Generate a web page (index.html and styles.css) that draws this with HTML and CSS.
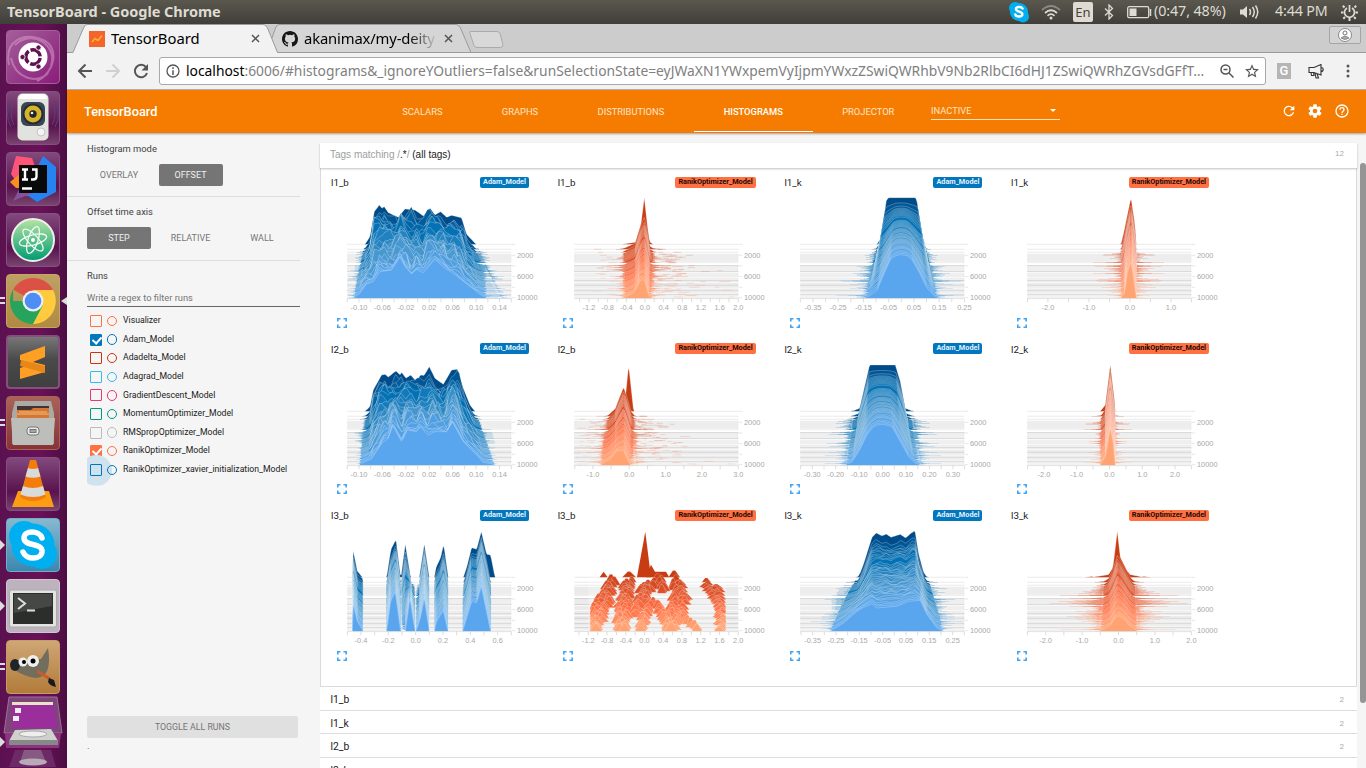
FILE: index.html
```html
<!DOCTYPE html>
<html lang="en">
<head>
<meta charset="utf-8">
<title>TensorBoard</title>
<link rel="stylesheet" href="styles.css">
</head>
<body>
<div class="desktop">
  <header class="panel">
    <span class="panel-title">TensorBoard - Google Chrome</span>
    <div class="indicators">
      <svg class="ind-skype" width="22" height="22" viewBox="0 0 22 22"><circle cx="7" cy="7" r="6" fill="#00aff0"/><circle cx="15" cy="15.500" r="6" fill="#00aff0"/><circle cx="11" cy="11" r="9" fill="#00aff0"/><path d="M14.500 7.600C13.500 5.400 7.700 5.400 7.900 8.200 8.100 11.200 14.500 10 14.400 13.200 14.300 16.200 8.200 16.200 7.300 13.500" fill="none" stroke="#fff" stroke-width="2.400" stroke-linecap="round"/></svg>
      <svg class="ind-wifi" width="20" height="16" viewBox="0 0 20 16" fill="none" stroke-width="1.700"><path d="M1 6Q10-2 19 6" stroke="#8a8982"/><path d="M4 9Q10 3.500 16 9" stroke="#dfdbd2"/><path d="M6.500 11.800Q10 8.600 13.500 11.800" stroke="#dfdbd2"/><circle cx="10" cy="14" r="1.500" fill="#dfdbd2"/></svg>
      <span class="ind-lang">En</span>
      <svg class="ind-bt" width="10" height="16" viewBox="0 0 10 16" fill="none" stroke="#dfdbd2" stroke-width="1.300"><path d="M1 4.500 8.500 11.500 5 15V1L8.500 4.500 1 11.500"/></svg>
      <svg class="ind-bat" width="25" height="13" viewBox="0 0 25 13"><rect x=".7" y=".7" width="21" height="11" rx="1.500" fill="none" stroke="#dfdbd2" stroke-width="1.300"/><rect x="2.500" y="2.500" width="7" height="7.500" fill="#dfdbd2"/><path d="M23.500 3v7" stroke="#dfdbd2" stroke-width="1.500"/></svg>
      <span class="ind-text battery-text">(0:47, 48%)</span>
      <svg class="ind-vol" width="21" height="16" viewBox="0 0 21 16" fill="none" stroke="#dfdbd2" stroke-width="1.500"><path d="M1 5.500h3L8 2v12L4 10.500H1z" fill="#dfdbd2" stroke="none"/><path d="M10.500 5q2 3 0 6M13.500 3q3.500 5 0 10M16.500 1.500q4.500 6.500 0 13"/></svg>
      <span class="ind-text clock">4:44 PM</span>
      <svg class="ind-gear" width="17" height="17" viewBox="0 0 17 17" fill="none" stroke="#dfdbd2"><path d="M6 4a5 5 0 1 0 5 0M8.500 1v7" stroke-width="1.700"/><path d="M3.500 3.500 1.800 1.800M13.500 3.500l1.700-1.700M2.500 8.500H0M14.500 8.500H17M4 13l-1.700 1.700M13 13l1.700 1.700M8.500 14v3" stroke-width="2"/></svg>
    </div>
  </header>

  <div class="workspace">
    <nav class="launcher">
      <div class="app app-dash"><svg viewBox="0 0 54 54"><path d="M3 35C-2 10 18 2 37 10 54 17 49 43 31 51M9 15C27-2 52 16 45 36M5 28C9 48 31 55 42 43" fill="none" stroke="#d69bcb" stroke-width="2" opacity=".55"/><circle cx="27" cy="27" r="14.500" fill="#fff"/><circle cx="27" cy="27" r="7.200" fill="none" stroke="#5f1150" stroke-width="3.500" stroke-dasharray="13.100 2" stroke-dashoffset="-1"/><g fill="#5f1150" stroke="#fff" stroke-width=".8"><circle cx="16.500" cy="27" r="2.600"/><circle cx="32.500" cy="17.500" r="2.600"/><circle cx="32.500" cy="36.500" r="2.600"/></g></svg></div>
      <div class="app"><svg viewBox="0 0 54 54"><g fill="none" stroke="#58407c"><path d="M8 12q-6 11 0 22M5 10q-7 13 0 26M46 12q6 11 0 22M49 10q7 13 0 26"/></g><rect x="11.500" y="2.500" width="31" height="47" rx="5" fill="#e2e2df"/><path d="M13 8q0-5 5-5h18q5 0 5 5" fill="#fff"/><rect x="15" y="11" width="24" height="24" rx="6" fill="#3c4552"/><circle cx="27" cy="23" r="10.500" fill="#202c3a"/><circle cx="27" cy="23" r="8.500" fill="#d7b329"/><circle cx="27" cy="23" r="3.700" fill="#20262c"/><circle cx="26" cy="22" r="1.300" fill="#eee"/><circle cx="35" cy="41" r="4" fill="#f4f4f4" stroke="#c4c4c4"/></svg></div>
      <div class="app"><svg viewBox="0 0 54 54"><path d="m10 4 16 2 12 34-18 4L5 22z" fill="#fc5577"/><path d="m4 30 10-8 9 14-13 0z" fill="#f98f20"/><path d="m37 4 13 11v25L31 50 18 41z" fill="#2683ef"/><path d="M7 49 17 30l12 10z" fill="#83549b"/><rect x="13" y="13" width="28" height="28" fill="#090909"/><path d="M16 17.500h6M19 17.500v10M16 27.500h6M30.500 16.500v8q0 3-3.500 3H25M26 17.500h5.500M16 36.500h10" fill="none" stroke="#fff" stroke-width="2.400"/></svg></div>
      <div class="app"><svg viewBox="0 0 54 54"><defs><linearGradient id="atomFill" x2="0" y2="1"><stop stop-color="#b7e4a4"/><stop offset="1" stop-color="#009b70"/></linearGradient></defs><circle cx="27" cy="27" r="21" fill="url(#atomFill)" stroke="#eee" stroke-width="2"/><g fill="none" stroke="#eefbf3" stroke-width="1.300"><ellipse cx="27" cy="27" rx="14" ry="5" transform="rotate(-15 27 27)"/><ellipse cx="27" cy="27" rx="14" ry="5" transform="rotate(48 27 27)"/><ellipse cx="27" cy="27" rx="14" ry="5" transform="rotate(108 27 27)"/></g><circle cx="27" cy="27" r="2" fill="#fff"/></svg></div>
      <div class="app app-chrome is-active"><svg viewBox="0 0 54 54"><path d="M27 27 7.100 15.500A23 23 0 0 1 46.900 15.500z" fill="#dc5145"/><path d="M27 27H7.100V15.500A23 23 0 0 0 27 50L38 32z" fill="#26a35c"/><path d="M27 16h20A23 23 0 0 1 27 50L37 31z" fill="#ffca3e"/><circle cx="27" cy="27" r="10.500" fill="#eee"/><circle cx="27" cy="27" r="8.300" fill="#4d8df5"/></svg></div>
      <div class="app app-sublime"><svg viewBox="0 0 54 54"><path d="m14 20 25-9v11l-12 5 12 3v7l-25 7V33l12-4-12-4z" fill="#ff9f23"/><path d="m15 25 24 6v7L14 31z" fill="#e8861a"/></svg></div>
      <div class="app app-files"><svg viewBox="0 0 54 54"><path d="M6 17 9 5h36l3 12v31H6z" fill="#aaa9a5"/><path d="M11 10h32v12H11z" fill="#433"/><path d="M11 14h14l2-2h16v10H11z" fill="#d67634"/><path d="M11 18h32M13 16h28" stroke="#f4bd79"/><path d="M5 22h44l-2 27H7z" fill="#bdbdba"/><rect x="21" y="31" width="12" height="8" rx="3" fill="#e9e9e9" stroke="#777"/><rect x="24" y="33.500" width="6" height="3" fill="#a7a7a7" stroke="#777"/></svg></div>
      <div class="app"><svg viewBox="0 0 54 54"><path d="M12 34h31l5 16H6z" fill="#ff9d12"/><path d="M24 3h6l10 37q-13 8-26 0z" fill="#f47c0b"/><path d="m22 11-2.500 8.500q7.500 2.500 15 0L32 11q-5 2-10 0zM17 29l-2.500 8.500q12.500 5 25 0L37 29q-10 4-20 0z" fill="#d9dada"/></svg></div>
      <div class="app app-skype"><svg viewBox="0 0 54 54"><circle cx="18" cy="18" r="15" fill="#00aff0"/><circle cx="36" cy="36" r="15" fill="#00aff0"/><circle cx="27" cy="27" r="21.500" fill="#00aff0"/><path d="M36 20C33 12 18 12 18 20 18 29 37 24 36 34 35 42 20 42 17 34" fill="none" stroke="#fff" stroke-width="5.500" stroke-linecap="round"/></svg></div>
      <div class="app app-term"><svg viewBox="0 0 54 54"><rect x="3.500" y="11" width="47" height="37" rx="2" fill="#e3e3e3" stroke="#aaa"/><rect x="7" y="14" width="40" height="31" fill="#2c2e2c"/><path d="M8 15h38v12L8 34z" fill="#464846"/><path d="m12 19 7 5.500-7 5.500M21 31.500h8" fill="none" stroke="#ddd" stroke-width="2"/></svg></div>
      <div class="app app-gimp"><svg viewBox="0 0 54 54"><path d="M12 20Q24 19 35 19L42 8q5 30-13 30Q17 36 9 30z" fill="#736d5e"/><ellipse cx="9" cy="25" rx="5" ry="6" fill="#20252a"/><circle cx="17" cy="22" r="4.500" fill="#eee"/><circle cx="27" cy="21" r="6" fill="#eee"/><circle cx="18" cy="22" r="2"/><circle cx="27" cy="21" r="2.500"/><path d="m31 31 13 8" stroke="#c95c2d" stroke-width="3"/><path d="m43 38 5 2 2 7q-6-1-8-5z" fill="#171b1e"/></svg></div>
      <div class="app-stack"><svg viewBox="0 0 60 72"><path d="m6 1 48 0 5 36H1z" fill="#7d4679" stroke="#a26d9c"/><path d="M9 6h41l5 26H9z" fill="#9a2f9c"/><path d="M9 6h41v3H9z" fill="#e9e3c8"/><path d="M12 12h6v5h-6zM10 20h6v5h-6z" fill="#eee"/><path d="M2 38h56l-2 14H3z" fill="#8e337f"/><path d="m12 34 36-1 7 12H6z" fill="#d0d1cf"/><ellipse cx="30" cy="38" rx="14" ry="3" fill="#eee" stroke="#aaa"/><path d="M6 44h49v5H6z" fill="#858987"/><path d="M12 54h36l5 17H6z" fill="#6c2a66"/><path d="M21 54h17l5 12H17z" fill="#865a82"/><ellipse cx="30" cy="66" rx="14" ry="3.500" fill="#b9aab7"/></svg></div>
      <div class="marks"><i class="mark two m1"></i><i class="mark two m2"></i><i class="mark tri m3"></i><i class="mark tri m4"></i><i class="mark two m5"></i><i class="mark tri m6"></i><i class="mark back m7"></i></div>
    </nav>

    <section class="browser">
      <div class="tabstrip">
        <svg class="tab-shapes" width="1299" height="29" viewBox="0 0 1299 29"><path d="M0 28.500H6L16.500 4Q18 .5 20 .5H196Q199 .5 200.500 4L210.500 28.500H1299V29H0z" fill="#f2f2f2"/><path d="M205 14 208.500 4Q210 .5 212 .5H389Q392 .5 393.500 4L404 28.500H211z" fill="#d5d5d5"/><path d="M0 28.500H6L16.500 4Q18 .5 20 .5H196Q199 .5 200.500 4L210.500 28.500H1299M205 14 208.500 4Q210 .5 212 .5H389Q392 .5 393.500 4L404 28.500" fill="none" stroke="#9b9b9b"/><path d="M403 7.500h27q2 0 3 2l3 11q0 3-3 3h-23q-2 0-3-2l-4-12q-.5-2 0-2z" fill="#d8d8d8" stroke="#aaa"/></svg>
        <div class="tab tab-one"><svg width="16" height="16" viewBox="0 0 16 16"><path d="M0 0h16v16H0z" fill="#f4652b"/><path d="m3 11 3-3.500 3 2 4-5" fill="none" stroke="#ffb02e" stroke-width="1.600"/></svg><span class="tab-name">TensorBoard</span><svg class="close" width="9" height="9" viewBox="0 0 9 9"><path d="m1 1 7 7M8 1 1 8" stroke="#555" stroke-width="1.500"/></svg></div>
        <div class="tab tab-two"><svg width="16" height="16" viewBox="0 0 16 16"><path fill="#161616" d="M8 0C3.580 0 0 3.580 0 8c0 3.540 2.290 6.530 5.470 7.590.4.070.55-.17.55-.38v-1.490c-2.010.37-2.530-.49-2.690-.94-.09-.23-.48-.94-.82-1.130-.28-.15-.68-.52-.01-.53.63-.01 1.080.58 1.230.82.72 1.210 1.870.87 2.330.66.07-.52.28-.87.51-1.070-1.780-.2-3.640-.89-3.640-3.950 0-.87.31-1.590.82-2.150-.08-.2-.36-1.020.08-2.120 0 0 .67-.21 2.200.82a7.600 7.600 0 0 1 4 0c1.530-1.040 2.200-.82 2.200-.82.44 1.100.16 1.920.08 2.120.51.56.82 1.270.82 2.150 0 3.070-1.870 3.750-3.650 3.950.29.25.54.73.54 1.480v2.200c0 .21.15.46.55.38A8 8 0 0 0 16 8c0-4.420-3.580-8-8-8z"/></svg><span class="tab-name fade">akanimax/my-deity</span><svg class="close" width="9" height="9" viewBox="0 0 9 9"><path d="m1 1 7 7M8 1 1 8" stroke="#555" stroke-width="1.500"/></svg></div>
        <div class="profile"><svg width="14" height="14" viewBox="0 0 14 14"><circle cx="7" cy="7" r="6.500" fill="#fff" stroke="#888"/><circle cx="7" cy="5" r="2" fill="none" stroke="#777"/><path d="M3 10q4-3.500 8 0-4 3-8 0z" fill="#aaa" stroke="#777" stroke-width=".7"/></svg></div>
      </div>
      <div class="toolbar">
        <svg class="nav" width="16" height="16" viewBox="0 0 16 16"><path d="M8.500 1.500 2 8l6.500 6.500M2 8h13" fill="none" stroke="#555" stroke-width="2"/></svg>
        <svg class="nav" width="16" height="16" viewBox="0 0 16 16"><path d="M7.500 1.500 14 8l-6.500 6.500M14 8H1" fill="none" stroke="#d0d0d0" stroke-width="2"/></svg>
        <svg class="nav" width="16" height="16" viewBox="0 0 16 16"><path d="M13 4.200A6.200 6.200 0 1 0 14 10" fill="none" stroke="#555" stroke-width="2"/><path d="M15 1v6.500H8.500z" fill="#555"/></svg>
        <div class="omnibox">
          <svg width="14" height="14" viewBox="0 0 14 14"><circle cx="7" cy="7" r="6" fill="none" stroke="#555" stroke-width="1.300"/><path d="M7 6.300V11M7 3.300v1.600" stroke="#555" stroke-width="1.500"/></svg>
          <span class="url"><b>localhost</b>:6006/#histograms&amp;_ignoreYOutliers=false&amp;runSelectionState=eyJWaXN1YWxpemVyIjpmYWxzZSwiQWRhbV9Nb2RlbCI6dHJ1ZSwiQWRhZGVsdGFfT…</span>
          <svg class="glass" width="14" height="14" viewBox="0 0 14 14" fill="none" stroke="#555" stroke-width="1.500"><circle cx="5.500" cy="5.500" r="4.500"/><path d="m9 9 4.500 4.500M3.500 5.500h4"/></svg>
          <svg width="14" height="14" viewBox="0 0 24 24"><path fill="#555" d="m22 9.240-7.190-.62L12 2 9.190 8.630 2 9.240l5.460 4.730L5.820 21 12 17.270 18.180 21l-1.630-7.030L22 9.240zM12 15.400l-3.760 2.270 1-4.280-3.320-2.880 4.380-.38L12 6.100l1.710 4.040 4.380.38-3.320 2.880 1 4.280L12 15.400z" transform="matrix(1.200 0 0 1.200 -2.400 -2)"/></svg>
        </div>
        <span class="ext-g">G</span>
        <svg class="mega" width="16" height="15" viewBox="0 0 16 15" fill="none" stroke="#333" stroke-width="1.100"><path d="M1 3.500h5l7-3v10.500L6 8.500H1zM3 8.500l.5 3H6L5.500 8.500M13 3.500q2.200 0 2.200 2T13 7.500M7 9l1 5h2.500L9 9.500"/></svg>
        <svg class="dots" width="4" height="14" viewBox="0 0 4 14" fill="#555"><circle cx="2" cy="2" r="1.500"/><circle cx="2" cy="7" r="1.500"/><circle cx="2" cy="12" r="1.500"/></svg>
      </div>

      <div class="tb-header">
        <span class="tb-brand">TensorBoard</span>
        <div class="tb-tabs"><span>SCALARS</span><span>GRAPHS</span><span>DISTRIBUTIONS</span><span class="selected">HISTOGRAMS</span><span>PROJECTOR</span></div>
        <div class="inactive">INACTIVE<i class="caret"></i></div>
        <div class="tb-icons">
          <svg viewBox="0 0 24 24"><path d="M17.650 6.350A7.960 7.960 0 0 0 12 4a8 8 0 1 0 7.730 10h-2.080A6 6 0 1 1 12 6c1.660 0 3.140.69 4.220 1.780L13 11h7V4l-2.350 2.350z"/></svg>
          <svg viewBox="0 0 24 24"><path d="M19.430 12.980c.04-.32.07-.64.07-.98s-.03-.66-.07-.98l2.110-1.650c.19-.15.24-.42.12-.64l-2-3.460c-.12-.22-.39-.3-.61-.22l-2.490 1c-.52-.4-1.080-.73-1.690-.98l-.38-2.650A.49.49 0 0 0 14 2h-4c-.25 0-.46.18-.49.42l-.38 2.650c-.61.25-1.170.59-1.690.98l-2.490-1c-.23-.09-.49 0-.61.22l-2 3.460c-.13.22-.07.49.12.64l2.110 1.650c-.04.32-.07.65-.07.98s.03.66.07.98l-2.110 1.650c-.19.15-.24.42-.12.64l2 3.460c.12.22.39.3.61.22l2.490-1c.52.4 1.080.73 1.690.98l.38 2.650c.03.24.24.42.49.42h4c.25 0 .46-.18.49-.42l.38-2.650c.61-.25 1.170-.59 1.690-.98l2.490 1c.23.09.49 0 .61-.22l2-3.460c.12-.22.07-.49-.12-.64l-2.110-1.650zM12 15.500a3.500 3.500 0 1 1 0-7 3.500 3.500 0 0 1 0 7z"/></svg>
          <svg viewBox="0 0 24 24"><path d="M11 18h2v-2h-2v2zm1-16a10 10 0 1 0 0 20 10 10 0 0 0 0-20zm0 18a8 8 0 1 1 0-16 8 8 0 0 1 0 16zm0-14a4 4 0 0 0-4 4h2a2 2 0 1 1 4 0c0 2-3 1.750-3 5h2c0-2.250 3-2.500 3-5a4 4 0 0 0-4-4z"/></svg>
        </div>
      </div>

      <div class="tb-body">
        <aside class="sidebar">
          <div class="section mode"><h3>Histogram mode</h3><div class="buttons"><span>OVERLAY</span><span class="on">OFFSET</span></div></div>
          <div class="section axis-mode"><h3>Offset time axis</h3><div class="buttons"><span class="on">STEP</span><span>RELATIVE</span><span>WALL</span></div></div>
          <div class="section runs"><h3>Runs</h3><div class="filter">Write a regex to filter runs</div>
            <ul class="run-list">
              <li class="orange"><i class="box"></i><i class="ring"></i>Visualizer</li>
              <li class="blue"><i class="box checked"></i><i class="ring"></i>Adam_Model</li>
              <li class="red"><i class="box"></i><i class="ring"></i>Adadelta_Model</li>
              <li class="cyan"><i class="box"></i><i class="ring"></i>Adagrad_Model</li>
              <li class="pink"><i class="box"></i><i class="ring"></i>GradientDescent_Model</li>
              <li class="teal"><i class="box"></i><i class="ring"></i>MomentumOptimizer_Model</li>
              <li class="gray"><i class="box"></i><i class="ring"></i>RMSpropOptimizer_Model</li>
              <li class="orange"><i class="box checked"></i><i class="ring"></i>RanikOptimizer_Model</li>
              <li class="blue rippled"><i class="box"></i><i class="ring"></i>RanikOptimizer_xavier_initialization_Model</li>
            </ul>
          </div>
          <div class="toggle">TOGGLE ALL RUNS</div>
          <div class="logdir">.</div>
        </aside>
        <main class="content">
          <div class="pane-head"><span><em>Tags matching /</em>.*<em>/</em> (all tags)</span><small>12</small></div>
          <div class="cards" id="cards"></div>
          <div class="row"><span>l1_b</span><small>2</small></div>
          <div class="row"><span>l1_k</span><small>2</small></div>
          <div class="row"><span>l2_b</span><small>2</small></div>
          <div class="row"><span>l2_k</span><small>2</small></div>
        </main>
        <i class="scrollbar"></i>
      </div>
    </section>
  </div>
</div>
<script src="charts.js"></script>
</body>
</html>
```
FILE: styles.css
```css
* { box-sizing: border-box; }
body { margin: 0; font-family: Roboto, "Liberation Sans", sans-serif; overflow: hidden; }
svg { display: block; flex: none; }
.desktop { width: 1366px; height: 768px; display: flex; flex-direction: column; overflow: hidden; }
.panel { height: 24px; flex: none; display: flex; justify-content: space-between; align-items: center; background: linear-gradient(#5a584e, #3f3e39); color: #dfdbd2; font-family: "Noto Sans", sans-serif; padding: 0 8px 0 7px; }
.panel-title { font-size: 14.5px; font-weight: 700; line-height: 22px; height: 24px; white-space: nowrap; letter-spacing: -.03px; }
.indicators { display: flex; align-items: center; white-space: nowrap; }
.ind-wifi { margin-left: 11px; }
.ind-lang { margin-left: 12px; width: 20px; height: 20px; border-radius: 2px; background: #dfdbd2; color: #45443e; font-size: 13px; line-height: 20px; text-align: center; }
.ind-bt { margin-left: 11px; }
.ind-bat { margin-left: 13px; }
.ind-text { font-size: 14.3px; line-height: 22px; height: 24px; }
.battery-text { width: 74px; margin-left: 2px; letter-spacing: -.1px; }
.ind-vol { margin-left: 11px; }
.clock { width: 55px; margin-left: 15px; letter-spacing: -.15px; }
.ind-gear { margin-left: 11px; }

.workspace { flex: 1; display: flex; min-height: 0; }
.launcher { width: 67px; flex: none; position: relative; background: linear-gradient(90deg, #5b1150, #691158 60%, #4b0e42); padding: 6px 7px 0 6px; display: flex; flex-direction: column; gap: 7px; }
.app { width: 54px; height: 54px; flex: none; border-radius: 4px; border: 1px solid #84507e; background: linear-gradient(#82497d, #59124d 65%, #79446f); overflow: hidden; }
.app svg { width: 54px; height: 54px; margin: -1px; }
.app-dash { background: linear-gradient(135deg, #a35f98, #8b1c7c); border-color: #a35f98; }
.app-chrome { background: linear-gradient(#bfa064, #b08a42); border-color: #c6a665; }
.app-sublime { background: linear-gradient(#777, #4a4a4a 45%, #3f3f3f); border: 2px solid #84507e; }
.app-sublime svg { margin: -2px; }
.app-files { background: linear-gradient(#a96358, #863338); border-color: #a96358; }
.app-skype { background: linear-gradient(#87b9d0, #3c87b0); border-color: #73adc9; }
.app-term { background: #bcb3be; border-color: #cfc7cf; }
.app-gimp { background: linear-gradient(#cfa675, #b27b3a); border-color: #c69b66; }
.app-stack { width: 60px; height: 72px; margin: -5px 0 0 -3px; }
.mark { position: absolute; }
.two { left: 0; width: 5px; height: 7px; border: solid #ddd; border-width: 2px 0; }
.tri { left: 0; border: 5px solid transparent; border-left-color: #ddd; border-right: 0; }
.back { right: 0; border: 4px solid transparent; border-right: 6px solid #ddd; border-left: 0; }
.m1 { top: 273px; } .m2 { top: 395px; } .m3 { top: 516px; } .m4 { top: 577px; } .m5 { top: 639px; } .m6 { top: 713px; } .m7 { top: 273px; }

.browser { flex: 1; min-width: 0; display: flex; flex-direction: column; background: #f2f2f2; }
.tabstrip { height: 29px; flex: none; background: #ccc; position: relative; display: flex; font-family: "Noto Sans", sans-serif; }
.tab-shapes { position: absolute; left: 0; top: 0; }
.tab { position: relative; height: 29px; display: flex; align-items: center; font-size: 14.8px; color: #000; }
.tab-one { padding-left: 22px; width: 215px; }
.tab-one .tab-name { width: 134px; }
.tab-name { margin-left: 6px; width: 140px; height: 24px; line-height: 22px; white-space: nowrap; overflow: hidden; letter-spacing: 0; }
.tab-two .tab-name { width: 134px; letter-spacing: -.15px; }
.close { margin-left: 6px; }
.fade { color: transparent; background: linear-gradient(90deg, #000 78%, transparent 100%); background-clip: text; -webkit-background-clip: text; }
.profile { margin-left: auto; margin-right: 5px; margin-top: 2px; width: 32px; height: 18px; border: 1px solid #a5a5a5; border-radius: 2px; background: #d3d3d3; display: flex; align-items: center; justify-content: center; position: relative; }
.toolbar { height: 37px; flex: none; border-bottom: 1px solid #b5b5b5; padding: 0 16px 0 10px; display: flex; align-items: center; background: #f2f2f2; }
.nav { margin-right: 12px; }
.omnibox { width: 1107px; height: 28px; border: 1px solid #a9a9a9; border-radius: 3px; background: #fff; display: flex; align-items: center; padding: 0 6px; }
.nav + .omnibox { margin-left: -2px; }
.url { width: 1024px; margin-left: 6px; white-space: nowrap; color: #808080; font: 13.83px/26px "Noto Sans", sans-serif; }
.url b { font-weight: 400; color: #000; }
.glass { margin: 0 11px 0 10px; }
.ext-g { width: 16px; height: 16px; margin-left: 11px; background: #b5b5b5; color: #fff; font-size: 13px; font-weight: 500; line-height: 16px; text-align: center; }
.mega { margin-left: 17px; }
.dots { margin-left: 22px; }

.tb-header { height: 43px; flex: none; position: relative; z-index: 1; display: flex; background: #f57c00; color: #fff; box-shadow: 0 1px 2px rgba(0,0,0,.35); padding-left: 17px; }
.tb-brand { width: 288.5px; font-size: 12.8px; font-weight: 500; line-height: 44px; }
.tb-tabs { display: flex; height: 42px; }
.tb-tabs span { padding: 0 29.7px; font-size: 9.35px; line-height: 44px; color: #fde5cc; }
.tb-tabs .selected { color: #fff; font-weight: 500; border-bottom: 1px solid #fff; }
.inactive { width: 129px; height: 18px; margin: 12px 0 0 7px; border-bottom: 1px solid #ffe0bd; font-size: 9.3px; line-height: 18px; color: #fde5cc; display: flex; justify-content: space-between; align-items: center; }
.caret { border: 3.5px solid transparent; border-top-color: #fff; border-bottom: 0; margin-right: 4px; }
.tb-icons { margin: 13px 16.5px 0 auto; display: flex; gap: 10.5px; }
.tb-icons svg { width: 16px; height: 16px; fill: #fff; }

.tb-body { flex: 1; min-height: 0; display: flex; position: relative; background: #f5f5f5; }
.sidebar { width: 253px; flex: none; font-size: 9.3px; color: #555; display: flex; flex-direction: column; padding: 0 20px 0 0; }
.sidebar h3 { margin: 0; font-size: 9.4px; line-height: 12px; font-weight: 400; color: #424242; }
.section { padding-left: 20px; border-bottom: 1px solid #ddd; }
.mode { height: 64px; padding-top: 10px; }
.axis-mode { height: 64px; padding-top: 9px; }
.runs { padding-top: 9px; border: 0; }
.buttons { display: flex; gap: 7.5px; margin-top: 9px; }
.buttons span { width: 64px; height: 22px; line-height: 22px; text-align: center; border-radius: 2px; color: #757575; font-size: 9px; }
.buttons .on { background: #757575; color: #f0f0f0; }
.filter { margin-top: 9px; height: 16px; border-bottom: 1px solid #666; line-height: 14px; color: #757575; font-size: 9.3px; }
.run-list { list-style: none; margin: 4px 0 0; padding: 0; color: #212121; font-size: 8.7px; }
.run-list li { height: 18.6px; display: flex; align-items: center; white-space: nowrap; position: relative; line-height: 16px; }
.box { width: 12px; height: 12px; flex: none; border: 1px solid currentColor; border-radius: 1px; margin: 1.5px 4.5px 0 3px; position: relative; }
.ring { width: 10.5px; height: 10.5px; flex: none; border: 1.4px solid currentColor; border-radius: 50%; margin: 1.5px 6px 0 0; position: relative; }
.checked { background: currentColor; }
.checked::after { content: ""; position: absolute; left: 3px; top: 0; width: 4px; height: 7px; border: solid #fff; border-width: 0 2px 2px 0; transform: rotate(42deg); }
.orange i { color: #ff7043; } .blue i { color: #0277bd; } .red i { color: #cc3311; } .cyan i { color: #33bbee; } .pink i { color: #ee3377; } .teal i { color: #009988; } .gray i { color: #bbb; }
.rippled::before { content: ""; position: absolute; left: -6px; top: -5px; width: 31px; height: 31px; border-radius: 50%; background: #cfe2ed; clip-path: inset(0 0 0 6px); }
.toggle { margin: auto 2px 0 20px; height: 22px; flex: none; background: #e0e0e0; border-radius: 2px; color: #757575; font-size: 8.8px; line-height: 22px; text-align: center; }
.logdir { margin: 4px 0 15px 20px; height: 11px; line-height: 8px; flex: none; }

.content { width: 1037px; flex: none; padding-top: 10px; font-size: 9.8px; color: #212121; }
.pane-head { height: 25px; background: #fff; box-shadow: 0 1px 2px rgba(0,0,0,.25); position: relative; padding: 0 13px 0 10px; display: flex; justify-content: space-between; font-family: "Liberation Sans", sans-serif; font-size: 10px; line-height: 23px; }
.pane-head em { font-style: normal; color: #9e9e9e; }
.pane-head small { font-size: 8px; color: #aaa; line-height: 21px; }
.cards { height: 519px; background: #fff; border: 1px solid #dadada; border-width: 0 1px 1px; padding: 8px 0 0 10px; display: grid; grid-template-columns: repeat(4, 226.7px); grid-auto-rows: 166.6px; }
.card-head { width: 198px; height: 16px; display: flex; justify-content: space-between; align-items: flex-start; font-size: 9.8px; line-height: 13px; }
.chip { height: 11px; border-radius: 2px; padding: 0 3px; margin-top: .6px; font-size: 7.3px; line-height: 10.5px; font-weight: 700; }
.chip.adam { background: #0277bd; color: #e4f2fb; }
.chip.ranik { background: #ff7043; color: #1d0a03; }
.plot text { font-family: "Liberation Sans", sans-serif; font-size: 7.4px; fill: #a8a8a8; }
.expand { width: 10px; height: 10px; margin: 2.6px 0 0 5.8px; }
.row { height: 23.7px; background: #fff; border-bottom: 1px solid #ddd; padding: 1px 13px 0 10.5px; display: flex; justify-content: space-between; line-height: 24.5px; font-size: 10.3px; }
.row small { font-size: 8px; color: #aaa; line-height: 23px; }
.scrollbar { position: absolute; right: 0; top: 30px; width: 6px; height: 540px; border-radius: 3px; background: #959595; }
```
FILE: charts.js
```js
// Ridge histograms. Keyframes hold [x, y] outlines in third-pixels with the y of their baseline;
// outlines between keyframes are interpolated along the step axis.
const STEPS = [0, 15, 24, 30, 33, 36, 39, 42, 45, 48, 51, 55, 64, 67, 70, 73, 76, 79, 82, 88, 91, 94, 97, 102, 105, 109, 112, 117, 120, 123, 126, 129, 134, 138, 141, 144, 150, 154, 158, 162];
const HEAVY = new Set([64, 82, 109, 123, 138, 150]);
const PALETTE = {
  adam: [[0, 76, 138], [2, 112, 180], [70, 150, 205], [89, 166, 239]],
  ranik: [[199, 60, 18], [222, 82, 42], [255, 112, 67], [255, 163, 114]]
};

const charts = [
  { tag: 'l1_b', run: 'adam', ox: 82, lx: 117, sp: 70.3, labels: '-0.10 -0.06 -0.02 0.02 0.06 0.10 0.14', noise: 44, tail: 9, keys: [
    [0, 313, [[135,313],[150,290],[163,215],[178,195],[186,205],[193,200],[205,218],[235,232],[255,207],[285,210],[310,228],[330,204],[345,225],[362,215],[380,232],[395,226],[425,234],[440,283],[468,313]]],
    [1, 475, [[100,475],[120,460],[140,432],[160,425],[180,395],[215,390],[240,350],[255,380],[275,402],[290,388],[310,398],[345,358],[375,385],[400,400],[425,420],[450,440],[480,463],[500,473],[545,474],[548,475]]]] },
  { tag: 'l1_b', run: 'ranik', ox: 72, lx: 116, sp: 56, labels: '-1.2 -0.8 -0.4 0.0 0.4 0.8 1.2 1.6 2.0', noise: 2, tail: 10, specks: 1, keys: [
    [0, 238, [[215,238],[255,232],[272,178],[282,98],[292,190],[298,230],[308,238]]],
    [.1, 254, [[218,252],[255,235],[272,180],[282,162],[290,192],[298,244],[315,254]]],
    [1, 401, [[217,400],[250,385],[262,365],[268,348],[280,345],[285,355],[296,395],[310,401]]]] },
  { tag: 'l1_k', run: 'adam', ox: 60, lx: 98, sp: 75.7, labels: '-0.35 -0.25 -0.15 -0.05 0.05 0.15 0.25', noise: 0, tail: 16, keys: [
    [0, 238, [[290,238],[303,215],[318,107],[325,98],[405,98],[410,107],[425,215],[435,238]]],
    [1, 401, [[248,401],[268,393],[290,378],[310,330],[330,285],[345,274],[360,270],[380,273],[395,285],[415,320],[440,370],[460,392],[476,401]]]] },
  { tag: 'l1_k', run: 'ranik', ox: 741, lx: 803, sp: 123, labels: '-2.0 -1.0 0.0 1.0', noise: 0, tail: 20, keys: [
    [0, 238, [[1022,238],[1030,205],[1052,98],[1064,180],[1068,238]]],
    [1, 401, [[1022,401],[1033,385],[1040,330],[1052,290],[1060,340],[1068,401]]]] },
  { tag: 'l2_b', run: 'adam', ox: 82, lx: 117, sp: 70.3, labels: '-0.10 -0.06 -0.02 0.02 0.06 0.10 0.14', noise: 44, tail: 5, keys: [
    [0, 229, [[135,229],[150,215],[160,165],[185,120],[195,118],[205,126],[228,108],[240,120],[245,112],[258,130],[272,120],[288,138],[302,120],[312,122],[328,95],[345,130],[370,148],[395,105],[412,103],[430,160],[450,210],[465,229]]],
    [1, 391, [[119,391],[120,387],[155,372],[185,325],[205,310],[218,272],[245,320],[262,285],[290,290],[300,275],[325,300],[345,290],[380,290],[397,260],[430,320],[465,355],[490,382],[523,388],[524,391]]]] },
  { tag: 'l2_b', run: 'ranik', ox: 762, lx: 818, sp: 109, labels: '-1.0 0.0 1.0 2.0 3.0', noise: 2, tail: 12, specks: 1, keys: [
    [0, 229, [[900,229],[912,222],[925,90],[940,229]]],
    [.09, 243, [[860,243],[885,220],[900,180],[910,155],[920,185],[932,228],[945,243]]],
    [1, 391, [[838,391],[870,372],[890,348],[910,346],[920,370],[930,388],[950,391]]]] },
  { tag: 'l2_k', run: 'adam', ox: 60, lx: 96, sp: 70.3, labels: '-0.30 -0.20 -0.10 0.00 0.10 0.20 0.30', noise: 0, tail: 15, keys: [
    [0, 229, [[215,229],[238,220],[268,90],[345,90],[360,140],[375,220],[398,229]]],
    [1, 391, [[190,391],[215,381],[235,350],[260,300],[275,280],[290,270],[310,268],[335,275],[360,320],[385,365],[405,384],[425,391]]]] },
  { tag: 'l2_k', run: 'ranik', ox: 741, lx: 791, sp: 98.3, labels: '-2.0 -1.0 0.0 1.0 2.0', noise: 0, tail: 12, keys: [
    [0, 229, [[960,229],[975,210],[990,90],[1003,200],[1005,229]]],
    [1, 391, [[960,389],[975,365],[990,280],[1000,330],[1004,391]]]] },
  { tag: 'l3_b', run: 'adam', ox: 82, lx: 123, sp: 82, labels: '-0.4 -0.2 0.0 0.2 0.4 0.6', noise: 0, tail: 0, keys: [
    [0, 219, [[99,219],[100,140],[112,200],[127,219],[200,219],[213,135],[228,105],[242,219],[243,219],[256,120],[272,219],[298,219],[313,120],[328,219],[343,219],[348,190],[362,160],[371,120],[385,219],[430,219],[440,190],[455,130],[470,135],[484,82],[500,150],[512,152],[525,219]]],
    [.08, 232, [[99,232],[100,158],[112,210],[127,219],[128,232],[200,232],[213,158],[228,119],[242,232],[244,232],[256,140],[274,232],[298,232],[313,134],[328,232],[343,232],[348,205],[362,178],[371,142],[385,232],[430,232],[440,204],[455,145],[470,150],[484,98],[500,168],[512,232]]],
    [1, 380, [[99,380],[100,300],[112,350],[127,375],[128,380],[200,380],[212,290],[226,262],[242,380],[256,380],[270,280],[285,380],[288,380],[300,345],[313,282],[328,380],[343,380],[350,350],[370,318],[384,380],[428,380],[455,290],[470,295],[484,245],[512,380]]]] },
  { tag: 'l3_b', run: 'ranik', ox: 762, lx: 804, sp: 56.2, labels: '-1.2 -0.8 -0.4 0.0 0.4 0.8 1.2 1.6 2.0', blobs: [
    [[.06,880],[.3,855],[.6,825],[1,827]], [[.1,880],[.5,862],[1,828]], [[0,925],[.1,930],[.5,905],[1,893]], [[.1,920],[.5,920],[1,912]], [[.1,985],[.3,965],[.6,985],[1,963]], [[.05,1025],[.2,1000],[.5,955],[.75,945]], [[0,1060],[.25,1080],[.5,1060],[1,1040]], [[.15,1050],[.4,1090],[.75,1080],[1,1055]],
    [[.05,1010],[.2,1030],[.3,1030]], [[.5,1000],[.75,1030],[1,1060]], [[.6,1060],[.8,1095],[1,1130]], [[.06,1150],[.3,1170],[.5,1195],[1,1207]], [[.2,1190],[.5,1203],[1,1202]]] },
  { tag: 'l3_k', run: 'adam', ox: 60, lx: 97, sp: 70, labels: '-0.35 -0.25 -0.15 -0.05 0.05 0.15 0.25', noise: 9, tail: 14, keys: [
    [0, 730, [[232,730],[240,716],[250,690],[275,610],[288,597],[305,606],[318,600],[332,610],[360,601],[376,612],[392,598],[404,590],[415,660],[430,715],[440,730]]],
    [1, 890, [[148,890],[165,881],[190,865],[230,830],[250,818],[275,808],[290,820],[350,815],[385,800],[420,797],[440,840],[468,878],[490,890]]]] },
  { tag: 'l3_k', run: 'ranik', ox: 741, lx: 796, sp: 109.3, labels: '-2.0 -1.0 0.0 1.0 2.0', noise: 1, tail: 28, keys: [
    [0, 730, [[935,730],[985,722],[998,700],[1011,592],[1020,670],[1040,710],[1050,722],[1090,730]]],
    [.09, 744, [[965,744],[985,733],[1000,700],[1011,664],[1020,676],[1040,712],[1055,735],[1068,744]]],
    [1, 890, [[950,890],[970,884],[990,872],[1005,850],[1015,843],[1030,852],[1050,875],[1070,887],[1078,890]]]] }
];

function generator(seed) {
  return () => { seed = (seed * 1664525 + 1013904223) >>> 0; return seed / 4294967296; };
}
function heightAt(pts, base, x) {
  if (x <= pts[0][0] || x >= pts[pts.length - 1][0]) return 0;
  let i = 1;
  while (pts[i][0] < x) i++;
  const [x0, y0] = pts[i - 1], [x1, y1] = pts[i];
  return base - (y0 + (y1 - y0) * (x - x0) / (x1 - x0));
}
function along(keys, t) {
  let i = 1;
  while (i < keys.length - 1 && keys[i][0] < t) i++;
  const a = keys[i - 1], b = keys[i];
  return [a, b, Math.max(0, Math.min(1, (t - a[0]) / (b[0] - a[0])))];
}
function shade(run, t) {
  const p = PALETTE[run], s = Math.min(2.999, t * 3), i = Math.floor(s), f = s - i;
  return 'rgb(' + p[i].map((v, k) => Math.round(v + (p[i + 1][k] - v) * f)).join() + ')';
}

function layers(c, seed) {
  const rnd = generator(seed);
  let out = '', drift = Array(40).fill(0);
  for (const step of STEPS) {
    const t = step / 162, fill = shade(c.run, t);
    out += `<path d="M0 ${step}H492" stroke="${HEAVY.has(step) ? '#c8c8c8' : '#e0e0e0'}" stroke-width="${HEAVY.has(step) ? 2.8 : 2.1}"/>`;
    if (c.blobs) {
      out += `<path d="M42 ${step}H456" stroke="#fff" stroke-opacity=".45" stroke-width="2.4"/>`;
      if (!step) out += `<path d="M188 0 213 -137 230 0z" fill="${fill}"/><path d="M215 0 230 -38 242 -17H275L285 0zM76 0 88 -17 100 0z" fill="${fill}"/>`;
      for (const b of c.blobs) {
        if (t < b[0][0] || t > b[b.length - 1][0]) continue;
        const [p, q, f] = along(b, t), x = p[1] + (q[1] - p[1]) * f - c.ox + (rnd() - .5) * 16;
        const w = 13 + rnd() * 9, h = b[0][1] > 1140 ? 13 : 15 + rnd() * 12;
        const left = Math.max(46, x - w), right = Math.min(456, x + w);
        out += `<path d="M${left} ${step}L${x - 4} ${step - h}H${x + 3}L${right} ${step}z" fill="${fill}" stroke="#fff" stroke-opacity=".5" stroke-width="1.3"/>`;
      }
      continue;
    }
    drift = drift.map(v => v * .6 + (rnd() - .5) * 1.1);
    const [a, b, f] = along(c.keys, t);
    const first = a[2][0][0] * (1 - f) + b[2][0][0] * f;
    const last = a[2][a[2].length - 1][0] * (1 - f) + b[2][b[2].length - 1][0] * f;
    // Interpolate over a support that widens with the step, so no step inherits the widest outline.
    const stretch = (k, X) => {
      const p = k[2], l = p[0][0], r = p[p.length - 1][0];
      const edge = 30;
      if (c.tail && X < first + edge) return l + (X - first);
      if (c.tail && X > last - edge) return r + (X - last);
      return l + edge + (X - first - edge) * (r - l - 2 * edge) / (last - first - 2 * edge);
    };
    const warp = c.run === 'adam' && c.tail && !c.noise;
    const burst = rnd();
    const reach = c.tail * (.2 + burst * burst * 2) * (t ? 1 : .3), pts = [];
    for (let x = 3; x < 490; x += 3) {
      const X = x + c.ox;
      let h = warp
        ? heightAt(a[2], a[1], stretch(a, X)) * (1 - f) + heightAt(b[2], b[1], stretch(b, X)) * f
        : heightAt(a[2], a[1], X) * (1 - f) + heightAt(b[2], b[1], X) * f;
      if (!warp && (X < first || X > last)) h *= .15;
      if (c.noise && h > 15) {
        const u = x / 16, i = Math.floor(u), n = drift[i] + (drift[i + 1] - drift[i]) * (u - i);
        h = Math.max(3, h + n * c.noise * Math.min(1, t * 8) * Math.min(1, (1 - t) * 6) * Math.min(1, h / 70));
      }
      if (c.tail) {
        const d = X < first + 4 ? first + 4 - X : X > last - 4 ? X - last + 4 : 0;
        if (d) h = Math.max(h, 3.4 * Math.exp(-d / reach));
      }
      pts.push([x, step - (h < .25 ? 0 : h)]);
    }
    const line = pts.map(p => p[0] + ' ' + p[1].toFixed(1)).join('L');
    out += `<path d="M3 ${step}L${line}V${step}z" fill="${fill}"/><path d="M${line}" fill="none" stroke="#fff" stroke-opacity=".5" stroke-width="1.6"/>`;
    if (c.specks && step) for (let k = 0; k < 2; k++) {
      const x = last - c.ox + 5 + rnd() * rnd() * (70 + t * 260), w = 10 + rnd() * 24;
      out += `<path d="M${x} ${step}h${Math.min(w, 480 - x)}" stroke="${fill}" stroke-opacity=".33" stroke-width="2"/>`;
      if (k === 0 && rnd() > .5) out += `<path d="M${first - c.ox - 30 - rnd() * 60} ${step}h${w}" stroke="${fill}" stroke-opacity=".25" stroke-width="2"/>`;
    }
  }
  return out;
}

function plot(c, seed) {
  let axis = '<path d="M0 163H492" stroke="#ddd" stroke-width="2"/>', text = '';
  for (let x = c.lx - c.ox - Math.floor((c.lx - c.ox + 2) / (c.sp / 2)) * c.sp / 2; x < 494; x += c.sp / 2) axis += `<path d="M${x} 163v11" stroke="#ccc" stroke-width="2"/>`;
  for (const y of [0, 33, 65, 97, 129, 160]) axis += `<path d="M493 ${y}h11" stroke="#ddd" stroke-width="2"/>`;
  c.labels.split(' ').forEach((s, i) => { text += `<text x="${16.3 + (c.lx - c.ox + i * c.sp) / 3}" y="118" text-anchor="middle">${s}</text>`; });
  [['2000', 66], ['6000', 87], ['10000', 108]].forEach(([s, y]) => { text += `<text x="186" y="${y}">${s}</text>`; });
  return `<svg class="plot" width="214" height="123" viewBox="0 0 214 123"><g transform="translate(16.3 52.3) scale(.33333)">${layers(c, seed)}${axis}</g>${text}</svg>`;
}

document.getElementById('cards').innerHTML = charts.map((c, i) => `<div class="card">
  <div class="card-head"><span>${c.tag}</span><span class="chip ${c.run}">${c.run === 'adam' ? 'Adam_Model' : 'RanikOptimizer_Model'}</span></div>
  ${plot(c, 71 + i * 97)}
  <svg class="expand" viewBox="0 0 10 10"><path d="M.8 3.500V.8H3.500M6.500.8H9.200V3.500M9.200 6.500V9.200H6.500M3.500 9.200H.8V6.500" fill="none" stroke="#42a5f5" stroke-width="1.600"/></svg>
</div>`).join('');
```
